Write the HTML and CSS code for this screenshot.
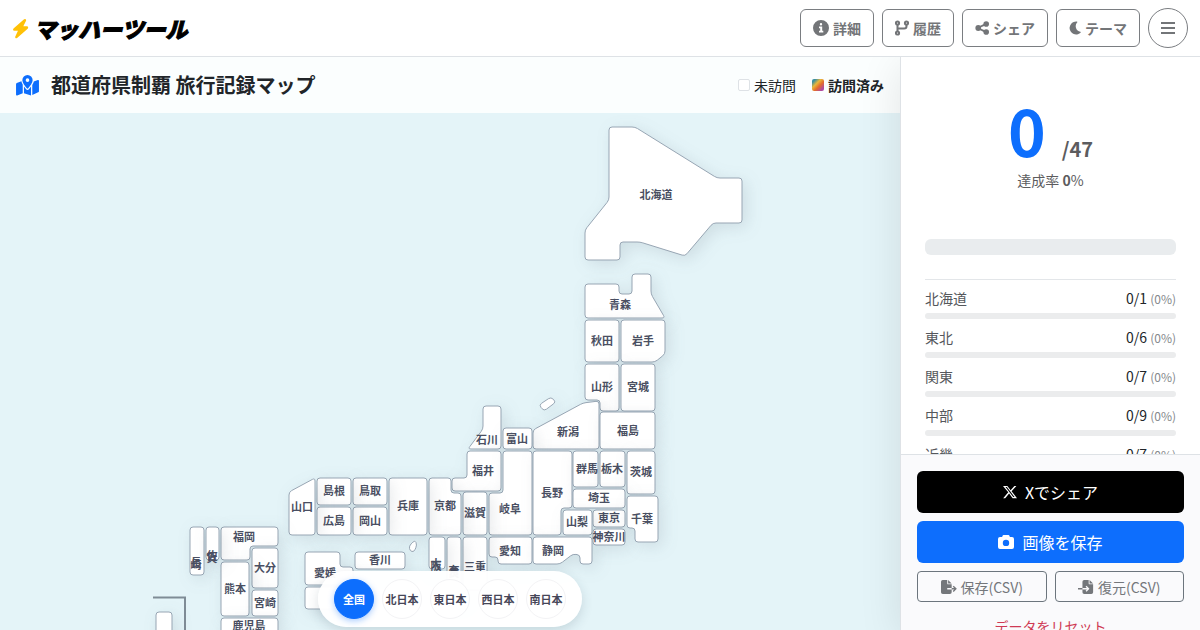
FILE: index.html
```html
<!DOCTYPE html>
<html lang="ja">
<head>
<meta charset="utf-8">
<meta name="viewport" content="width=device-width, initial-scale=1">
<title>都道府県制覇 旅行記録マップ</title>
<link rel="stylesheet" href="styles.css">
</head>
<body>
<div class="app">
  <header class="topbar">
    <a class="brand" href="#">
      <svg class="brand-bolt" viewBox="0 0 18 22" aria-hidden="true"><path d="M12.800 1.200 1.600 11Q.2 13.400 2.600 13.400H6.300L3.400 19.800Q3.200 22.200 5.400 21L16.600 11.200Q18 8.800 15.600 8.600H12L15 2.600Q15 0 12.800 1.200Z"/></svg>
      <span class="brand-name">マッハーツール</span>
    </a>
    <nav class="actions">
      <button class="outline-btn" type="button">
        <svg class="icon" viewBox="0 0 16 16"><path fill-rule="evenodd" d="M8 0a8 8 0 1 1 0 16A8 8 0 0 1 8 0ZM8 3a1.200 1.200 0 1 0 0 2.400A1.200 1.200 0 0 0 8 3ZM6 6.500V8.200h1.200v2.600H6v1.700h4.300v-1.700H9.200V6.500Z"/></svg>
        詳細
      </button>
      <button class="outline-btn" type="button">
        <svg class="icon icon-line icon-slim" viewBox="1 0 14 16"><circle cx="3.500" cy="3" r="1.600"/><circle cx="3.500" cy="13" r="1.600"/><circle cx="12.500" cy="3" r="1.600"/><path d="M3.500 4.800v6.400M12.500 4.800v1.400q0 2.300-2.300 2.300H3.500"/></svg>
        履歴
      </button>
      <button class="outline-btn" type="button">
        <svg class="icon icon-slim" viewBox="0 0 15 16"><circle cx="3.500" cy="8" r="3.100"/><circle cx="12" cy="3.700" r="3"/><circle cx="12" cy="12.300" r="3"/><path d="m3 7 8.500-4.300 1 2L4.500 8l8 3.300-1 2L3 9Z"/></svg>
        シェア
      </button>
      <button class="outline-btn" type="button">
        <svg class="icon icon-moon" viewBox="0 0 13 16"><path d="M8.500 1A7 7 0 1 0 12.700 12.800Q13 12 12.300 12A6 6 0 0 1 9 1.900Q9.400 1.200 8.500 1Z"/></svg>
        テーマ
      </button>
      <button class="menu-btn" type="button" aria-label="メニュー">
        <svg class="icon icon-line" viewBox="0 0 16 16"><path d="M1 3h14M1 8h14M1 13h14"/></svg>
      </button>
    </nav>
  </header>

  <div class="content">
    <main class="map-panel">
      <div class="map-head">
        <h1 class="title">
          <svg class="title-icon" viewBox="0 0 24 22" aria-hidden="true"><path fill-rule="evenodd" d="M12 0a5.400 5.400 0 0 1 5.400 5.400C17.400 8 14.500 11.500 12.700 14q-.7.900-1.400 0C9.500 11.500 6.600 8 6.600 5.400A5.400 5.400 0 0 1 12 0Zm0 3.500a1.900 1.900 0 1 0 0 3.800 1.900 1.900 0 0 0 0-3.800Z"/><path d="M.8 8.500 5.600 6.500Q6 8.300 7 10v9.200L1.200 21.500Q0 21.800 0 20.700V9.700Q0 8.900.8 8.500ZM8.300 12l2 2.700q1.700 2 3.400 0l2-2.700v9.500L8.300 19.200ZM17 10.500q1.200-2 1.600-3.700l4.200-1.600Q24 5 24 6v11q0 .8-.8 1.200L17 21Z"/></svg>
          都道府県制覇 旅行記録マップ
        </h1>
        <div class="legend">
          <span class="legend-item"><i class="swatch"></i>未訪問</span>
          <span class="legend-item legend-done"><i class="swatch swatch-done"></i>訪問済み</span>
        </div>
      </div>
      <div class="map-area">
        <svg class="map" viewBox="0 113 900 517" preserveAspectRatio="xMidYMin meet" role="img" aria-label="日本地図">
          <path class="inset" d="M153 597.500H185V630"/>
          <g id="shapes" class="shapes"></g>
          <g id="labels" class="labels"></g>
        </svg>
        <div class="regions">
          <button class="region active" type="button">全国</button>
          <button class="region" type="button">北日本</button>
          <button class="region" type="button">東日本</button>
          <button class="region" type="button">西日本</button>
          <button class="region" type="button">南日本</button>
        </div>
      </div>
    </main>

    <aside class="side">
      <div class="stats">
        <div class="score"><strong class="score-now">0</strong><span class="score-total">/47</span></div>
        <p class="rate">達成率 <b>0</b>%</p>
        <div class="total-bar"></div>
        <ul class="areas">
          <li class="area"><span class="area-name">北海道</span><span class="area-count">0/1 <small>(0%)</small></span><span class="bar"></span></li>
          <li class="area"><span class="area-name">東北</span><span class="area-count">0/6 <small>(0%)</small></span><span class="bar"></span></li>
          <li class="area"><span class="area-name">関東</span><span class="area-count">0/7 <small>(0%)</small></span><span class="bar"></span></li>
          <li class="area"><span class="area-name">中部</span><span class="area-count">0/9 <small>(0%)</small></span><span class="bar"></span></li>
          <li class="area"><span class="area-name">近畿</span><span class="area-count">0/7 <small>(0%)</small></span><span class="bar"></span></li>
        </ul>
      </div>
      <div class="side-actions">
        <button class="big-btn big-x" type="button">
          <svg class="icon icon-x" viewBox="0 0 16 16"><path fill-rule="evenodd" d="M0 1h5l3.700 4.900L13 1h2.300L9.800 7.200 16 15h-5L7 9.800 2.500 15H.2L6 8.400Zm2.800 1.300L11.700 13.700h1.500L4.400 2.300Z"/></svg>
          Xでシェア
        </button>
        <button class="big-btn big-save" type="button">
          <svg class="icon" viewBox="0 0 16 16"><path fill-rule="evenodd" d="M5.500 1h5q.7 0 .9.700L11.900 3H14q2 0 2 2v8q0 2-2 2H2q-2 0-2-2V5q0-2 2-2h2.100l.5-1.300Q4.800 1 5.500 1ZM8 5.700a3.200 3.200 0 1 0 0 6.400 3.200 3.200 0 0 0 0-6.400Z"/></svg>
          画像を保存
        </button>
        <div class="csv">
          <button class="csv-btn" type="button">
            <svg class="icon" viewBox="0 0 18 16"><path d="M2 0h5v4q0 1 1 1h4v4.200H7v1.600h5V14q0 2-2 2H2q-2 0-2-2V2Q0 0 2 0ZM8 0l4 4H8ZM12 9.200h2.800l-1.600-1.600 1.100-1.100L17.800 10l-3.500 3.500-1.100-1.100 1.600-1.600H12Z"/></svg>
            保存(CSV)
          </button>
          <button class="csv-btn" type="button">
            <svg class="icon" viewBox="0 0 18 16"><path fill-rule="evenodd" d="M7 0h5v4q0 1 1 1h4v9q0 2-2 2H7q-2 0-2-2v-3.200h5l-1.500 1.500 1.100 1.100 3.300-3.400-3.300-3.400-1.100 1.100L10 9.200H5V2q0-2 2-2ZM13 0l4 4h-4ZM0 9.200h5v1.600H0Z"/></svg>
            復元(CSV)
          </button>
        </div>
        <button class="reset" type="button">データをリセット</button>
      </div>
    </aside>
  </div>
</div>
<script src="map.js"></script>
</body>
</html>
```

FILE: styles.css
```css
* { box-sizing: border-box; }

body {
  margin: 0;
  color: #212529;
  background: #fff;
  font-family: "Noto Sans CJK JP", sans-serif;
  font-size: 14px;
  line-height: 21px;
}

button {
  font-family: inherit;
  cursor: pointer;
}

.app {
  display: flex;
  flex-direction: column;
  height: 100vh;
  overflow: hidden;
}

.topbar {
  display: flex;
  align-items: center;
  justify-content: space-between;
  flex: none;
  height: 57px;
  padding: 0 12px;
  border-bottom: 1px solid #dee2e6;
}

.brand {
  display: flex;
  align-items: center;
  gap: 5px;
  color: #000;
  text-decoration: none;
}

.brand-bolt {
  width: 17px;
  height: 21px;
  fill: #ffc107;
}

.brand-name {
  font-size: 22px;
  font-style: italic;
  font-weight: 900;
  line-height: 32px;
  -webkit-text-stroke: 1px #000;
}

.actions {
  display: flex;
  align-items: center;
  gap: 8px;
}

.icon {
  flex: none;
  width: 16px;
  height: 16px;
  fill: currentColor;
}

.icon-line {
  fill: none;
  stroke: currentColor;
  stroke-width: 2;
}

.icon-slim { width: 14px; }

.icon-moon { width: 12px; }

.icon-x { width: 14px; }

.outline-btn {
  display: flex;
  align-items: center;
  gap: 4px;
  height: 38px;
  padding: 0 12px;
  color: #737578;
  background: transparent;
  border: 1px solid #7a7d81;
  border-radius: 6px;
  font-size: 14px;
  font-weight: 700;
}

.menu-btn {
  display: grid;
  place-items: center;
  width: 40px;
  height: 40px;
  padding: 0;
  color: #737578;
  background: transparent;
  border: 1px solid #7a7d81;
  border-radius: 50%;
}

.content {
  display: flex;
  flex: 1;
  min-height: 0;
}

.map-panel {
  display: flex;
  flex: 1;
  flex-direction: column;
  min-width: 0;
  background: #e4f4f8;
}

.map-head {
  display: flex;
  align-items: center;
  justify-content: space-between;
  flex: none;
  height: 56px;
  padding: 0 16px;
  background: #fbfefe;
}

.title {
  display: flex;
  align-items: center;
  gap: 12px;
  margin: 0;
  font-size: 20px;
  font-weight: 700;
  line-height: 30px;
}

.title-icon {
  width: 23px;
  height: 21px;
  fill: #0d6efd;
}

.legend {
  display: flex;
  gap: 16px;
}

.legend-item {
  display: flex;
  align-items: center;
  gap: 4px;
}

.legend-done { font-weight: 700; }

.swatch {
  width: 12px;
  height: 12px;
  background: #fff;
  border: 1px solid #dee2e6;
  border-radius: 2px;
}

.swatch-done {
  background: linear-gradient(135deg, #3a8fa0 15%, #e8b73a 38%, #e36b2c 60%, #b04aa0 85%);
  border: 0;
}

.map-area {
  position: relative;
  flex: 1;
  min-height: 0;
  overflow: hidden;
}

.map {
  display: block;
  width: 100%;
  height: 100%;
}

.shapes {
  fill: #fff;
  stroke: #97a5b3;
  stroke-width: 1;
}

.shapes path {
  filter: drop-shadow(4px 4px 8px rgba(60, 80, 90, 0.13));
}

.inset {
  fill: none;
  stroke: #7f8c96;
  stroke-width: 2;
}

.labels {
  fill: #4a4f62;
  font-size: 11px;
  font-weight: 700;
  text-anchor: middle;
}

.regions {
  position: absolute;
  bottom: 3px;
  left: 50%;
  display: flex;
  gap: 8px;
  padding: 8px 16px;
  background: rgba(255, 255, 255, 0.97);
  border-radius: 28px;
  box-shadow: 0 4px 12px rgba(40, 60, 80, 0.16);
  transform: translateX(-50%);
}

.region {
  width: 40px;
  height: 40px;
  padding: 0;
  color: #464658;
  background: #fff;
  border: 1px solid #f3f3f5;
  border-radius: 50%;
  font-size: 11px;
  font-weight: 700;
  white-space: nowrap;
}

.region.active {
  color: #fff;
  background: #0d6efd;
  border-color: #0d6efd;
  box-shadow: 0 2px 6px rgba(13, 110, 253, 0.35);
}

.side {
  z-index: 1;
  display: flex;
  flex: 0 0 300px;
  flex-direction: column;
  background: #fff;
  border-left: 1px solid #dee2e6;
  box-shadow: 0 8px 40px rgba(0, 0, 0, 0.1);
  clip-path: inset(0 0 0 -60px);
}

.stats {
  flex: 1;
  min-height: 0;
  padding: 36px 24px 0;
  overflow: hidden;
}

.score {
  display: flex;
  align-items: baseline;
  justify-content: center;
  gap: 16px;
  margin-bottom: 5px;
}

.score-now {
  color: #0d6efd;
  font-size: 64px;
  line-height: 72px;
}

.score-total {
  color: #5c5c5e;
  font-size: 20px;
  font-weight: 700;
}

.rate {
  margin: 0 0 48px;
  color: #5c5c5e;
  text-align: center;
}

.total-bar {
  height: 16px;
  background: #e9ecee;
  border-radius: 6px;
}

.areas {
  margin: 24px 0 0;
  padding: 8px 0 0;
  border-top: 1px solid #e3e6e9;
  list-style: none;
}

.area {
  display: grid;
  grid-template-columns: 1fr auto;
  row-gap: 4px;
  margin-bottom: 8px;
}

.area-name { color: #55585c; }

.area-count small {
  color: #85888c;
  font-size: 12px;
}

.bar {
  grid-column: 1 / -1;
  height: 6px;
  background: #ebeced;
  border-radius: 3px;
}

.side-actions {
  display: flex;
  flex: 0 0 176px;
  flex-direction: column;
  gap: 8px;
  padding: 16px 16px 0;
  overflow: hidden;
  background: #fafafc;
  border-top: 1px solid #dee2e6;
}

.big-btn {
  display: flex;
  align-items: center;
  justify-content: center;
  gap: 8px;
  flex: none;
  height: 42px;
  color: #fff;
  border: 0;
  border-radius: 6px;
  font-size: 16px;
}

.big-x { background: #000; }

.big-save { background: #0d6efd; }

.csv {
  display: flex;
  flex: none;
  gap: 8px;
}

.csv-btn {
  display: flex;
  flex: 1;
  align-items: center;
  justify-content: center;
  gap: 4px;
  height: 31px;
  padding: 0;
  color: #74777b;
  background: transparent;
  border: 1px solid #6c757d;
  border-radius: 4px;
  font-size: 14px;
}

.reset {
  flex: none;
  height: 31px;
  padding: 0;
  color: #cf3a55;
  background: transparent;
  border: 0;
  font-size: 14px;
}
```

FILE: map.js
```js
// Each entry: label, label centre x, label centre y, outline.
// Four numbers are a box (left, top, right, bottom); more are polygon points.
const prefectures = [
  ["北海道", 656, 195, [609,127, 635,127, 717,178, 742,178, 742,223, 713,223, 685,256, 640,242, 620,242, 620,260, 585,260, 585,230, 609,200]],
  ["青森", 620, 305, [585,284, 619,284, 619,294, 632,294, 632,274, 651,274, 651,294, 665,318, 585,318]],
  ["秋田", 602, 341, [585,320, 619,362]],
  ["岩手", 643, 341, [621,320, 665,320, 665,354, 655,362, 621,362]],
  ["山形", 602, 387, [585,364, 619,364, 619,411, 600,411, 600,400, 585,400]],
  ["宮城", 638, 387, [621,364, 655,411]],
  ["新潟", 568, 432, [533,430, 583,403, 599,401, 599,449, 533,449]],
  ["", 0, 0, [539,405, 551,397, 556,402, 544,411]],
  ["福島", 628, 431, [600,412, 655,449]],
  ["石川", 487, 440, [483,406, 501,406, 501,449, 468,449, 483,429]],
  ["富山", 517, 439, [503,428, 532,449]],
  ["福井", 483, 471, [467,451, 501,451, 501,491, 452,491, 452,478, 467,478]],
  ["岐阜", 510, 509, [503,451, 532,451, 532,535, 489,535, 489,493, 503,493]],
  ["長野", 552, 493, [533,451, 572,451, 572,508, 561,508, 561,535, 533,535]],
  ["群馬", 587, 469, [573,451, 598,487]],
  ["栃木", 612, 469, [600,451, 625,487]],
  ["茨城", 641, 472, [627,451, 655,494]],
  ["埼玉", 599, 498, [573,489, 625,508]],
  ["東京", 609, 518, [593,510, 625,527]],
  ["山梨", 577, 522, [563,510, 592,535]],
  ["神奈川", 609, 537, [593,529, 625,545]],
  ["千葉", 642, 519, [627,496, 658,496, 658,542, 635,542, 635,528, 627,528]],
  ["愛知", 510, 551, [489,537, 532,537, 532,564, 498,564, 498,557, 489,557]],
  ["静岡", 553, 551, [533,537, 592,537, 592,564, 580,564, 580,555, 573,554, 560,564, 533,564]],
  ["滋賀", 475, 513, [463,492, 487,535]],
  ["京都", 445, 506, [429,478, 451,478, 451,493, 461,493, 461,535, 429,535]],
  ["兵庫", 408, 506, [389,478, 427,535]],
  ["鳥取", 370, 491, [353,478, 387,505]],
  ["岡山", 370, 521, [353,507, 387,535]],
  ["島根", 334, 491, [317,478, 351,505]],
  ["広島", 334, 521, [317,507, 351,535]],
  ["山口", 302, 507, [289,492, 315,478, 315,535, 289,535]],
  ["三重", 475, 567, [463,537, 487,590]],
  ["奈良", 454, 571, [447,537, 461,600], 2],
  ["大阪", 436, 564, [429,537, 445,569], 2],
  ["", 0, 0, [409,546, 415,540, 417,545, 414,552, 410,551]],
  ["香川", 380, 560, [355,552, 405,569]],
  ["愛媛", 325, 573, [305,552, 340,552, 340,567, 353,567, 353,585, 305,585]],
  ["", 0, 0, [305,587, 351,609]],
  ["福岡", 244, 537, [221,527, 278,527, 278,546, 250,546, 250,560, 221,560]],
  ["大分", 265, 568, [252,548, 278,588]],
  ["熊本", 235, 589, [221,562, 249,616]],
  ["宮崎", 265, 603, [252,590, 278,616]],
  ["鹿児島", 249, 626, [221,618, 278,646]],
  ["長崎", 196, 563, [190,527, 204,575], 2],
  ["佐賀", 212, 556, [206,527, 219,560], 2],
  ["", 0, 0, [156,612, 172,650]]
];

const RADIUS = 3;

function outline(v) {
  const flat = v.length === 4 ? [v[0], v[1], v[2], v[1], v[2], v[3], v[0], v[3]] : v;
  const pts = [];
  for (let i = 0; i < flat.length; i += 2) pts.push([flat[i], flat[i + 1]]);
  const toward = (a, b) => {
    const len = Math.hypot(b[0] - a[0], b[1] - a[1]);
    const t = Math.min(RADIUS, len / 2) / len;
    return (a[0] + (b[0] - a[0]) * t) + " " + (a[1] + (b[1] - a[1]) * t);
  };
  return pts.map((p, i) => {
    const prev = pts[(i + pts.length - 1) % pts.length];
    const next = pts[(i + 1) % pts.length];
    return (i ? "L" : "M") + toward(p, prev) + "Q" + p[0] + " " + p[1] + " " + toward(p, next);
  }).join("") + "Z";
}

const NS = "http://www.w3.org/2000/svg";
const shapes = document.getElementById("shapes");
const labels = document.getElementById("labels");

function addText(text, x, y) {
  const el = document.createElementNS(NS, "text");
  el.setAttribute("x", x);
  el.setAttribute("y", y + 4);
  el.textContent = text;
  labels.appendChild(el);
}

for (const [name, x, y, points, step] of prefectures) {
  const path = document.createElementNS(NS, "path");
  path.setAttribute("d", outline(points));
  shapes.appendChild(path);
  // Narrow prefectures stack their characters, `step` pixels apart.
  if (step) [...name].forEach((ch, i) => addText(ch, x, y + i * step));
  else if (name) addText(name, x, y);
}
```
